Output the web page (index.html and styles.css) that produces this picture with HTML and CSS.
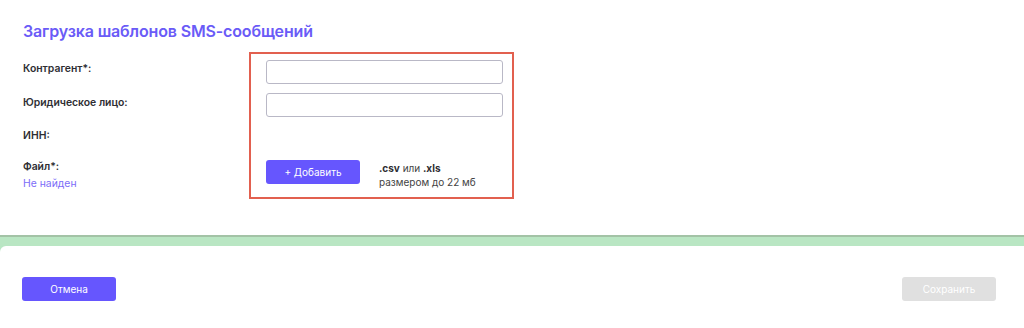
FILE: index.html
```html
<!DOCTYPE html>
<html>
<head>
<meta charset="utf-8">
<title>Загрузка шаблонов SMS-сообщений</title>
<link rel="stylesheet" href="styles.css">
</head>
<body>
<div class="card">
  <h1 class="title">Загрузка шаблонов SMS-сообщений</h1>
  <div class="form">
    <div class="labels">
      <div class="label row1">Контрагент*:</div>
      <div class="label row2">Юридическое лицо:</div>
      <div class="label row3">ИНН:</div>
      <div class="label row4">Файл*:<span class="missing">Не найден</span></div>
    </div>
    <div class="fields">
      <input class="field" type="text">
      <input class="field" type="text">
      <div class="spacer"></div>
      <div class="upload">
        <button class="btn primary add">+ Добавить</button>
        <div class="hint"><b>.csv</b> или <b>.xls</b><br>размером до 22 мб</div>
      </div>
    </div>
  </div>
</div>
<div class="footer">
  <button class="btn primary">Отмена</button>
  <button class="btn disabled">Сохранить</button>
</div>
</body>
</html>
```

FILE: styles.css
```css
body {
  margin: 0;
  background: #b9e6c3;
  font-family: 'Inter', 'Noto Sans', sans-serif;
  color: #333;
  height: 328px;
  overflow: hidden;
}

.card {
  background: #fff;
  height: 237px;
  border-bottom: 2px solid #a3c3a6;
  padding: 0 0 0 23px;
  box-sizing: border-box;
}

.title {
  margin: 0;
  padding-top: 20px;
  font-size: 16px;
  font-weight: 600;
  color: #6a5bf7;
  letter-spacing: -0.15px;
  line-height: 22px;
}

.form {
  display: flex;
  margin-top: 10px;
}

.labels {
  width: 226px;
  padding-top: 9px;
}

.label {
  font-size: 10.4px;
  font-weight: 600;
  color: #2e2e33;
  line-height: 16px;
}

.row1 { height: 34px; }
.row2 { height: 33px; }
.row3 { height: 31px; }

.missing {
  display: block;
  font-weight: 400;
  color: #7b6cf8;
  margin-top: 1px;
}

.fields {
  border: 2px solid #e2604f;
  width: 265px;
  height: 147px;
  box-sizing: border-box;
  padding: 6px 9px 0 15px;
  display: flex;
  flex-direction: column;
  gap: 9px;
}

.field {
  height: 24px;
  width: 237px;
  box-sizing: border-box;
  border: 1px solid #b9b8c6;
  border-radius: 3px;
  margin: 0;
  padding: 0 8px;
}

.spacer {
  height: 25px;
}

.upload {
  display: flex;
  align-items: flex-start;
  gap: 19px;
}

.btn {
  width: 94px;
  height: 24px;
  border: 0;
  border-radius: 3px;
  color: #fff;
  font-family: inherit;
  font-size: 10px;
  padding: 0;
}

.primary { background: #6656fe; }
.disabled { background: #e0e0e0; }

.hint {
  font-size: 10px;
  line-height: 14px;
  color: #444;
  margin-top: 1px;
}

.hint b {
  font-weight: 700;
  color: #2e2e33;
}

.footer {
  background: #fff;
  margin-top: 9px;
  height: 82px;
  border-top-left-radius: 6px;
  display: flex;
  justify-content: space-between;
  align-items: flex-start;
  padding: 31px 28px 0 22px;
  box-sizing: border-box;
}
```
